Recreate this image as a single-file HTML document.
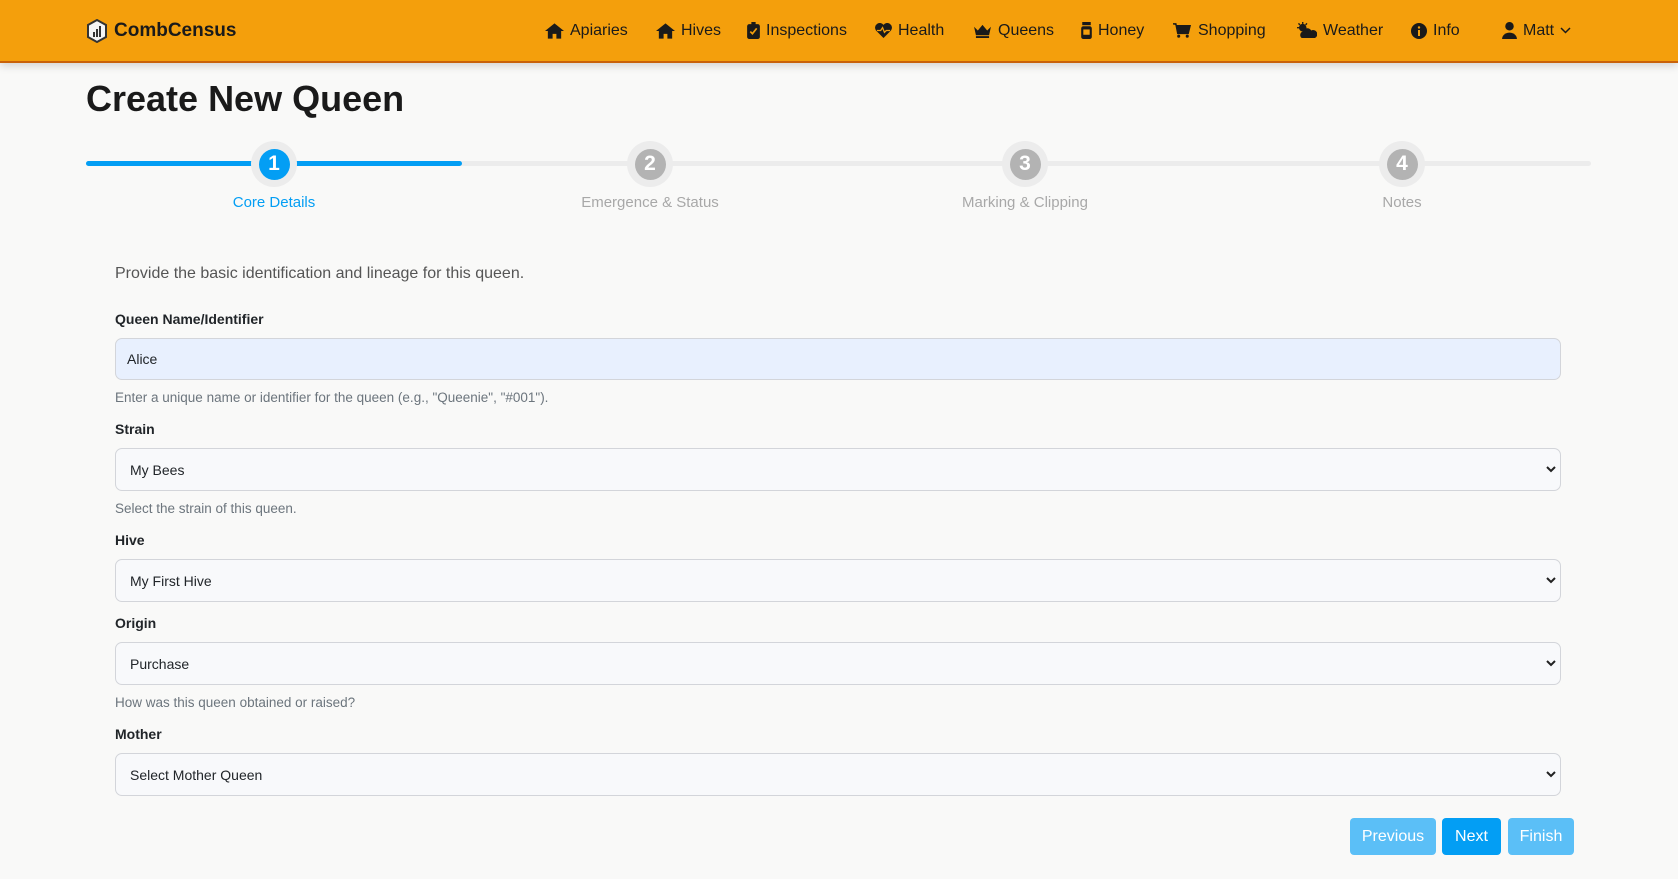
<!DOCTYPE html>
<html><head><meta charset="utf-8"><style>
*{box-sizing:border-box;margin:0;padding:0}
body{width:1678px;height:879px;background:#f9f9f8;font-family:"Liberation Sans",sans-serif;color:#212529;position:relative;overflow:hidden}
.nav{position:absolute;left:0;top:0;width:1678px;height:63px;background:#f49f0c;border-bottom:2px solid #c9620a;box-shadow:0 3px 8px rgba(0,0,0,.15)}
.a{position:absolute;top:0;height:61px;display:flex;align-items:center;font-size:16px;color:#1a1a1a}
.a svg{margin-right:6px}
.brand{font-weight:bold;font-size:19px}
h1{position:absolute;left:86px;top:78px;font-size:36px;font-weight:bold;color:#1a1a1a}
.ab{position:absolute}
.lbl{position:absolute;left:115px;font-size:14px;font-weight:bold}
.help{position:absolute;left:115px;font-size:13.5px;color:#6c757d}
.f{position:absolute;left:115px;width:1446px;border:1px solid #d3d5da;border-radius:7px;background:#f8f9fb;font-size:14px;padding-left:14px;display:flex;align-items:center}
.f .ch{position:absolute;right:4px;top:50%;margin-top:-4px}
.btn{position:absolute;top:818px;height:37px;border-radius:4px;color:#fff;font-size:16px;display:flex;align-items:center;justify-content:center}
.step{position:absolute;font-size:15px;color:#a8a8a8;transform:translateX(-50%);top:194px;white-space:nowrap}
.c{position:absolute;top:141px;width:46px;height:46px;margin-left:-23px;border-radius:50%;background:#ececec;display:flex;align-items:center;justify-content:center}
.c span{width:31px;height:31px;border-radius:50%;background:#b3b3b3;color:#fff;font-weight:bold;font-size:21px;display:flex;align-items:center;justify-content:center}
</style></head><body>
<div class="nav">
<div class="a brand" style="left:86px"><svg width="22" height="24" viewBox="0 0 22 24"><path d="M11 1L20 6V18L11 23L2 18V6Z" fill="#f5f5f5" stroke="#333" stroke-width="2"/><rect x="7" y="13" width="2" height="5" fill="#333"/><rect x="10" y="10" width="2" height="8" fill="#333"/><rect x="13" y="7" width="2" height="11" fill="#333"/></svg>CombCensus</div>
<div class="a" style="left:545px"><svg width="19" height="16" viewBox="0 0 20 16"><path d="M10 0L20 8H17V16H12V11H8V16H3V8H0Z" fill="#1a1a1a"/></svg>Apiaries</div>
<div class="a" style="left:656px"><svg width="19" height="16" viewBox="0 0 20 16"><path d="M10 0L20 8H17V16H12V11H8V16H3V8H0Z" fill="#1a1a1a"/></svg>Hives</div>
<div class="a" style="left:747px"><svg width="13" height="17" viewBox="0 0 12 16"><rect x="0" y="2" width="12" height="14" rx="2" fill="#1a1a1a"/><rect x="4" y="0" width="4" height="3" fill="#1a1a1a"/><path d="M3 9L5 11L9 6" stroke="#f49f0c" stroke-width="1.6" fill="none"/></svg>Inspections</div>
<div class="a" style="left:875px"><svg width="17" height="15" viewBox="0 0 18 16"><path d="M9 16L1 8A4.5 4.5 0 0 1 9 2A4.5 4.5 0 0 1 17 8Z" fill="#1a1a1a"/><path d="M2 8H6L8 5L10 10L12 8H16" stroke="#f49f0c" stroke-width="1.4" fill="none"/></svg>Health</div>
<div class="a" style="left:973px"><svg width="19" height="15" viewBox="0 0 20 16"><path d="M1 4L5 8L10 2L15 8L19 4L17 13H3Z" fill="#1a1a1a"/><rect x="3" y="14" width="14" height="2" fill="#1a1a1a"/></svg>Queens</div>
<div class="a" style="left:1081px"><svg width="11" height="17" viewBox="0 0 10 16"><rect x="1" y="0" width="8" height="3" fill="#1a1a1a"/><rect x="0" y="4" width="10" height="12" rx="2" fill="#1a1a1a"/><rect x="2" y="7" width="6" height="5" fill="#f49f0c"/></svg>Honey</div>
<div class="a" style="left:1173px"><svg width="19" height="17" viewBox="0 0 20 16"><path d="M0 1H3L5 11H16L18 3H4" fill="#1a1a1a" stroke="#1a1a1a" stroke-width="1.5"/><circle cx="6" cy="14" r="1.6" fill="#1a1a1a"/><circle cx="15" cy="14" r="1.6" fill="#1a1a1a"/></svg>Shopping</div>
<div class="a" style="left:1296px"><svg width="21" height="17" viewBox="0 0 22 18"><circle cx="7" cy="6" r="4" fill="#1a1a1a"/><path d="M7 0V2M1 6H3M2.5 1.5L4 3M11.5 1.5L10 3" stroke="#1a1a1a" stroke-width="1.5"/><path d="M6 17A4 4 0 0 1 7 10A5 5 0 0 1 16 9A4 4 0 0 1 20 17Z" fill="#1a1a1a"/></svg>Weather</div>
<div class="a" style="left:1411px"><svg width="16" height="16" viewBox="0 0 16 16"><circle cx="8" cy="8" r="8" fill="#1a1a1a"/><rect x="7" y="7" width="2" height="6" fill="#f49f0c"/><circle cx="8" cy="4.5" r="1.2" fill="#f49f0c"/></svg>Info</div>
<div class="a" style="left:1502px"><svg width="15" height="17" viewBox="0 0 14 16"><circle cx="7" cy="4" r="4" fill="#1a1a1a"/><path d="M0 16A7 6 0 0 1 14 16Z" fill="#1a1a1a"/></svg>Matt<svg style="margin-left:6px" width="11" height="7" viewBox="0 0 11 7"><path d="M1 1L5.5 5.5L10 1" stroke="#1a1a1a" stroke-width="1.5" fill="none"/></svg></div>
</div>
<h1>Create New Queen</h1>
<div class="ab" style="left:86px;top:161px;width:1505px;height:5px;background:#ececec;border-radius:3px"></div>
<div class="ab" style="left:86px;top:161px;width:376px;height:5px;background:#039ef4;border-radius:3px"></div>
<div class="c" style="left:274px"><span style="background:#039ef4">1</span></div>
<div class="c" style="left:650px"><span>2</span></div>
<div class="c" style="left:1025px"><span>3</span></div>
<div class="c" style="left:1402px"><span>4</span></div>
<div class="step" style="left:274px;color:#039ef4">Core Details</div>
<div class="step" style="left:650px">Emergence &amp; Status</div>
<div class="step" style="left:1025px">Marking &amp; Clipping</div>
<div class="step" style="left:1402px">Notes</div>
<div class="ab" style="left:115px;top:265px;font-size:16px;color:#555">Provide the basic identification and lineage for this queen.</div>
<div class="lbl" style="top:311px">Queen Name/Identifier</div>
<div class="f" style="top:338px;height:42px;background:#e8f0fe;padding-left:11px">Alice</div>
<div class="help" style="top:390px">Enter a unique name or identifier for the queen (e.g., "Queenie", "#001").</div>
<div class="lbl" style="top:421px">Strain</div>
<div class="f" style="top:448px;height:43px">My Bees<svg class="ch" width="10" height="7" viewBox="0 0 10 7"><path d="M1 1L5 5L9 1" stroke="#222" stroke-width="2" fill="none"/></svg></div>
<div class="help" style="top:501px">Select the strain of this queen.</div>
<div class="lbl" style="top:532px">Hive</div>
<div class="f" style="top:559px;height:43px">My First Hive<svg class="ch" width="10" height="7" viewBox="0 0 10 7"><path d="M1 1L5 5L9 1" stroke="#222" stroke-width="2" fill="none"/></svg></div>
<div class="lbl" style="top:615px">Origin</div>
<div class="f" style="top:642px;height:43px">Purchase<svg class="ch" width="10" height="7" viewBox="0 0 10 7"><path d="M1 1L5 5L9 1" stroke="#222" stroke-width="2" fill="none"/></svg></div>
<div class="help" style="top:695px">How was this queen obtained or raised?</div>
<div class="lbl" style="top:726px">Mother</div>
<div class="f" style="top:753px;height:43px">Select Mother Queen<svg class="ch" width="10" height="7" viewBox="0 0 10 7"><path d="M1 1L5 5L9 1" stroke="#222" stroke-width="2" fill="none"/></svg></div>
<div class="btn" style="left:1350px;width:86px;background:#5bbff7">Previous</div>
<div class="btn" style="left:1442px;width:59px;background:#039ef4">Next</div>
<div class="btn" style="left:1508px;width:66px;background:#5bbff7">Finish</div>
</body></html>
